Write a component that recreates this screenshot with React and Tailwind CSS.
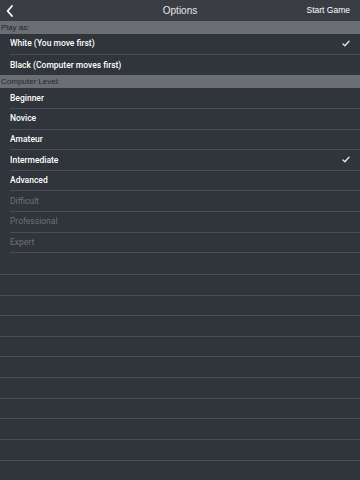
import React from "react";

const Check = () => (
  <svg width="8" height="7" viewBox="0 0 8 7" className="mr-[10px]">
    <path d="M1 4 L2.9 5.8 L7 1.2" fill="none" stroke="#e8e9ea" strokeWidth="1.3" strokeLinecap="round" strokeLinejoin="round" />
  </svg>
);

const rowFont = { fontFamily: 'Roboto, "Liberation Sans", Arial, sans-serif' };

function Row({ label, checked, disabled, noBorder }) {
  return (
    <div className="h-[20.625px] shrink-0 pl-[10px] flex">
      <div className={`flex-1 flex items-center justify-between ${noBorder ? "" : "border-b border-[#4a4d54]"}`}>
        <span style={rowFont} className={`text-[8.5px] ${disabled ? "text-[#6d7075]" : "text-white font-medium"}`}>{label}</span>
        {checked && <Check />}
      </div>
    </div>
  );
}

function Section({ title }) {
  return (
    <div className="h-[13px] shrink-0 bg-[#6b6e73] flex items-center pl-[1px]">
      <span className="text-[8px] text-[#24272c]">{title}</span>
    </div>
  );
}

export default function App() {
  const levels = [
    ["Beginner"],
    ["Novice"],
    ["Amateur"],
    ["Intermediate", true],
    ["Advanced"],
    ["Difficult", false, true],
    ["Professional", false, true],
    ["Expert", false, true],
  ];
  return (
    <div className="w-[360px] h-[480px] overflow-hidden bg-[#30343b] flex flex-col" style={{ fontFamily: '"Liberation Sans", Arial, sans-serif' }}>
      <div className="h-[21px] shrink-0 bg-[#3a3d44] flex items-center justify-between relative">
        <svg width="8" height="12" viewBox="0 0 8 12" className="ml-[6px]">
          <path d="M6 1 L1.6 6 L6 11" fill="none" stroke="#ffffff" strokeWidth="1.8" strokeLinecap="round" strokeLinejoin="round" />
        </svg>
        <span className="absolute left-0 right-0 text-center text-[10px] text-[#e6e7e8] pointer-events-none">Options</span>
        <span className="mr-[10px] text-[8.5px] text-white">Start Game</span>
      </div>
      <Section title="Play as:" />
      <Row label="White (You move first)" checked />
      <Row label="Black (Computer moves first)" noBorder />
      <Section title="Computer Level:" />
      {levels.map(([l, c, d]) => (
        <Row key={l} label={l} checked={c} disabled={d} />
      ))}
      {Array.from({ length: 12 }).map((_, i) => (
        <div key={i} className={`h-[20.625px] shrink-0 ${i === 0 ? "" : "border-t border-[#4a4d54]"}`} />
      ))}
    </div>
  );
}
